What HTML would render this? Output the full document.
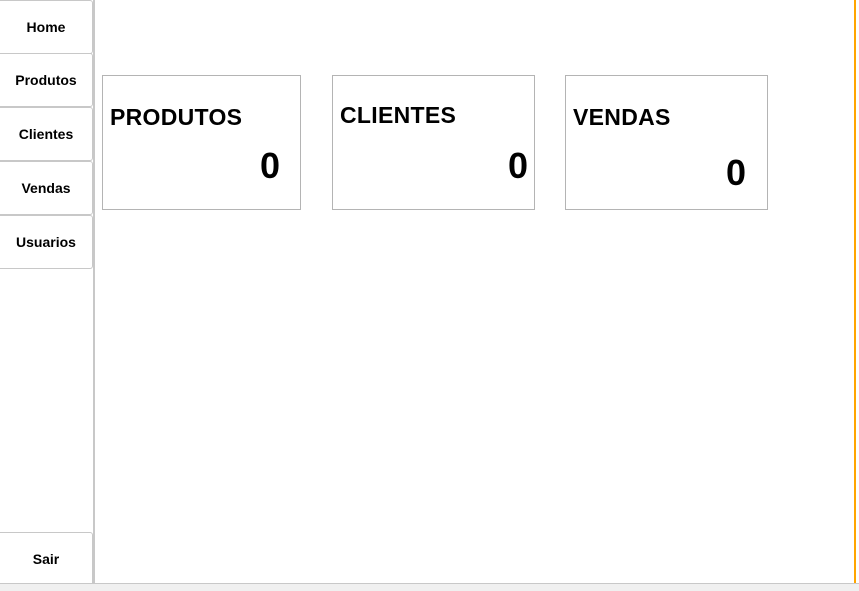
<!DOCTYPE html>
<html><head><style>
body{margin:0;width:859px;height:590px;background:#fff;position:relative;overflow:hidden;font-family:"Liberation Sans",Arial,sans-serif;}
.btn{position:absolute;left:0;width:92px;height:52px;border:1px solid #c8c8c8;border-left:none;border-radius:0 3px 3px 0;background:#fff;font-weight:bold;font-size:14px;display:flex;align-items:center;justify-content:center;}
.vl{position:absolute;left:93px;top:0;width:2px;height:584px;background:#c8c8c8;}
.card{position:absolute;top:75px;height:133px;border:1px solid #b4b4b4;background:#fff;}
.t{position:absolute;left:7px;font-weight:bold;font-size:23px;letter-spacing:0.3px;}
.n{position:absolute;font-weight:bold;font-size:36px;}
</style></head><body>
<div class="btn" style="top:0">Home</div>
<div class="btn" style="top:53px">Produtos</div>
<div class="btn" style="top:107px">Clientes</div>
<div class="btn" style="top:161px">Vendas</div>
<div class="btn" style="top:215px">Usuarios</div>
<div class="btn" style="top:532px">Sair</div>
<div class="vl"></div>
<div class="card" style="left:102px;width:197px"><div class="t" style="top:28px">PRODUTOS</div><div class="n" style="right:20px;top:69px">0</div></div>
<div class="card" style="left:332px;width:201px"><div class="t" style="top:26px">CLIENTES</div><div class="n" style="right:6px;top:69px">0</div></div>
<div class="card" style="left:565px;width:201px"><div class="t" style="top:28px">VENDAS</div><div class="n" style="right:21px;top:76px">0</div></div>
<div style="position:absolute;left:854px;top:0;width:2px;height:584px;background:#ffa500"></div>
<div style="position:absolute;left:0;top:583px;width:859px;height:7px;background:#f0f0f0;border-top:1px solid #c8c8c8"></div>
</body></html>
